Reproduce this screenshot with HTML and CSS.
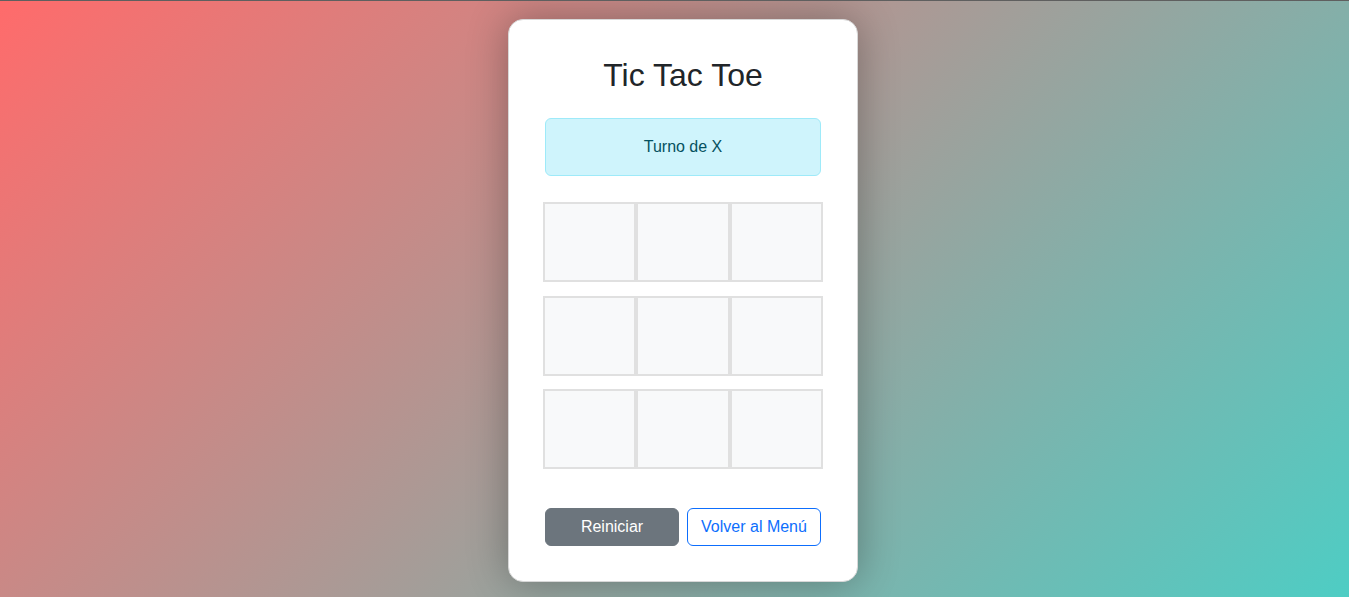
FILE: index.html
```html
<!DOCTYPE html>
<html lang="es">
<head>
<meta charset="utf-8">
<title>Tic Tac Toe</title>
<link rel="stylesheet" href="styles.css">
</head>
<body>
<main class="card">
  <h1 class="title">Tic Tac Toe</h1>
  <div class="alert">Turno de X</div>
  <div class="board">
    <div class="board-row">
      <button class="cell"></button><button class="cell"></button><button class="cell"></button>
    </div>
    <div class="board-row">
      <button class="cell"></button><button class="cell"></button><button class="cell"></button>
    </div>
    <div class="board-row">
      <button class="cell"></button><button class="cell"></button><button class="cell"></button>
    </div>
  </div>
  <div class="actions">
    <button class="btn btn-secondary">Reiniciar</button>
    <button class="btn btn-outline">Volver al Menú</button>
  </div>
</main>
</body>
</html>
```

FILE: styles.css
```css
* { box-sizing: border-box; }

html {
  margin: 0;
  border-top: 1px solid #5f5f5f;
  background: linear-gradient(135deg, #ff6b6b 0%, #4ecdc4 100%);
  min-height: 100%;
}

body {
  margin: 0;
  min-height: 596px;
  padding: 18px 0 0 17px;
  display: flex;
  justify-content: center;
  align-items: flex-start;
  font-family: "Liberation Sans", Arial, sans-serif;
  font-size: 16px;
  color: #212529;
}

.card {
  width: 350px;
  background: #fff;
  border: 1px solid #d8d8d8;
  border-radius: 15px;
  box-shadow: 0 0 40px rgba(0, 0, 0, 0.3);
  padding: 36px 36px 35px;
  display: flex;
  flex-direction: column;
}

.title {
  margin: 0 0 24px;
  font-size: 32px;
  font-weight: 400;
  line-height: 1.2;
  text-align: center;
  color: #212529;
}

.alert {
  background: #cff4fc;
  border: 1px solid #9eeaf9;
  color: #055160;
  border-radius: 6px;
  padding: 16px;
  line-height: 24px;
  text-align: center;
  margin-bottom: 26px;
}

.board {
  margin: 0 -2px;
  display: flex;
  flex-direction: column;
  gap: 13.5px;
}

.board-row {
  display: flex;
}

.cell {
  flex: 1 1 0;
  height: 80px;
  margin: 0;
  padding: 0;
  background: #f8f9fa;
  border: 2px solid #e0e0e0;
  border-radius: 0;
}

.actions {
  margin-top: 39px;
  display: flex;
  gap: 8px;
}

.btn {
  flex: 1 1 0;
  height: 38px;
  font-family: inherit;
  font-size: 16px;
  line-height: 24px;
  border-radius: 6px;
  padding: 6px 12px;
  border: 1px solid transparent;
}

.btn-secondary {
  background: #6c757d;
  border-color: #6c757d;
  color: #fff;
}

.btn-outline {
  background: #fff;
  border-color: #0d6efd;
  color: #0d6efd;
}
```
